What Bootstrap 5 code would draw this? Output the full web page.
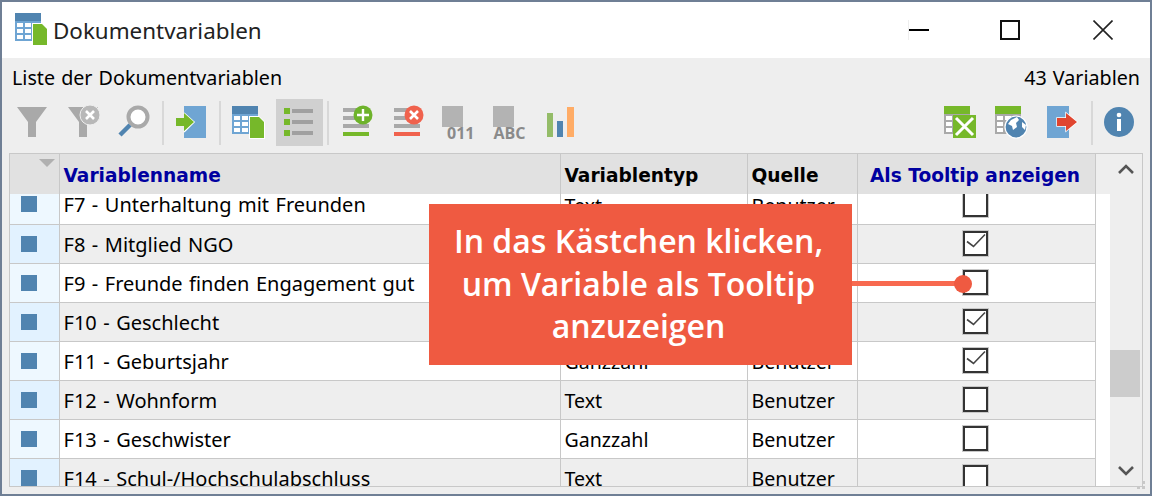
<!DOCTYPE html>
<html lang="de">
<head>
<meta charset="UTF-8">
<title>Dokumentvariablen</title>
<link rel="stylesheet" href="https://cdn.jsdelivr.net/npm/bootstrap@5.3.0/dist/css/bootstrap.min.css">
<style>
    html, body { margin: 0; height: 496px; overflow: hidden; }
    body { font-family: "Noto Sans", sans-serif; color: #000; }

    .app-window { position: relative; width: 1152px; height: 496px; background: #eee; border: 2px solid #6f7f95; overflow: hidden; }

    .title-bar { height: 56px; background: #fff; }
    .title-icon { margin-left: 11px; }
    .title-text { font-size: 22.4px; color: #222; margin-left: 6px; padding-top: 2px; }
    .win-btns { padding-right: 37px; }
    .win-min { width: 21px; height: 20px; margin-right: 71px; border-left: 1px solid #eee; position: relative; }
    .win-min::after { content: ""; position: absolute; left: 0; top: 9px; width: 20px; height: 2px; background: #000; }
    .win-max { margin-right: 73px; }

    .info-line { height: 39px; padding: 0 10px; font-size: 19.7px; word-spacing: 1px; }

    .tool-strip { height: 50px; padding: 2px 7px 0 6px; gap: 4px; align-items: flex-start; }
    .tool-btn { width: 47px; height: 47px; display: block; flex: none; }
    .tool-btn.is-on { background: #d0d0d0; margin-left: 1px; }
    .tool-sep { width: 2px; height: 44px; margin-top: 2px; background: #d8d8d8; flex: none; }
    .sep-l { margin-left: 1px; }
    .sep-n { margin-right: -1px; }
    .sep-r { margin-right: 1px; }

    .grid-box { margin: 6px 7px 0 7px; height: 334px; border: 1px solid #c8c8c8; }
    .grid-main { width: 1100px; flex: none; }
    .var-head { height: 40px; width: 1085px; background: #e1e1e1; }
    .var-table { table-layout: fixed; width: 1085px; border-collapse: collapse; margin: 0; }
    .var-table col:nth-child(1) { width: 49px; }
    .var-table col:nth-child(2) { width: 501px; }
    .var-table col:nth-child(3) { width: 187px; }
    .var-table col:nth-child(4) { width: 110px; }
    .var-table col:nth-child(5) { width: 238px; }
    .var-table td, .var-table th { border-right: 1px solid #c8c8c8; padding: 0 0 0 4px; font-size: 19.6px; vertical-align: middle; white-space: nowrap; overflow: hidden; }
    .var-table th { height: 40px; font-family: "DejaVu Sans", sans-serif; font-size: 18.6px; font-weight: 700; background: #e1e1e1; padding-top: 4px; }
    .var-table th.blue-head { color: #0000a0; }
    .var-table th.tip-head { padding: 4px 2px 0 0; }
    .var-table td { height: 39px; border-bottom: 1px solid #c8c8c8; padding-top: 2px; background: #fff; }
    .var-table td.name-cell { font-size: 20px; word-spacing: 1.3px; }
    .var-table tr:nth-child(even) td { background: #eee; }
    .var-table td.mark-cell { background: #eef8ff; padding: 0; }
    .var-table tr:nth-child(even) td.mark-cell { background: #e2f2ff; }
    .var-table .check-cell { padding: 0 2px 0 0; }
    .corner-cell { position: relative; }
    .sort-tri { position: absolute; left: 29px; top: 5px; width: 0; height: 0; border-left: 8px solid transparent; border-right: 8px solid transparent; border-top: 8px solid #b0b0b0; }
    .row-mark { display: block; width: 16px; height: 16px; background: #5084b0; margin: 0 0 0 11px; }

    .body-clip { height: 292px; overflow: hidden; background: #fff; }
    .body-clip .var-table { margin-top: -9px; }

    .tick-box { display: block; width: 25px; height: 25px; margin: 0 auto; background: #fff; border: 2px solid #333; box-shadow: 0 0 0 1px #c8c8c8; }
    .tick-box svg { display: block; }

    .scroll-col { width: 33px; flex: none; position: relative; }
    .scroll-thumb { position: absolute; left: 0; top: 196px; width: 30px; height: 47px; background: #ccc; }
    .scroll-up, .scroll-down { position: absolute; left: 7px; }
    .scroll-up { top: 9px; }
    .scroll-down { bottom: 9px; }

    .call-box { position: absolute; left: 427px; top: 202px; width: 423px; height: 161px; padding: 0 4px 1px 0; background: #ef5a41; color: #fff; font-family: "Open Sans", sans-serif; font-weight: 600; font-size: 32px; line-height: 42.5px; }
    .call-line { position: absolute; left: 850px; top: 279px; width: 106px; height: 5px; background: #f8694f; }
    .call-dot { position: absolute; left: 952px; top: 273px; width: 18px; height: 18px; border-radius: 50%; background: #ef5a41; }
    .grip-dots { position: absolute; right: 4px; bottom: 4px; }
</style>
</head>
<body>

<div class="app-window d-flex flex-column">

    <!-- Title bar -->
    <div class="title-bar d-flex align-items-center">
        <svg width="34" height="34" viewBox="13 13 34 34" class="flex-shrink-0 title-icon">
            <use href="#ico-table-doc" transform="translate(-217 -93)"/>
        </svg>
        <span class="title-text">Dokumentvariablen</span>
        <div class="win-btns ms-auto d-flex align-items-center">
            <div class="win-min"></div>
            <svg class="win-max" width="20" height="20" viewBox="0 0 20 20"><rect x="1" y="1" width="18" height="18" fill="none" stroke="#111" stroke-width="2"/></svg>
            <svg width="20" height="20" viewBox="0 0 20 20"><path d="M.5.5l19 19M19.5.5l-19 19" fill="none" stroke="#222" stroke-width="1.6"/></svg>
        </div>
    </div>

    <!-- Caption line -->
    <div class="info-line d-flex align-items-center justify-content-between">
        <span>Liste der Dokumentvariablen</span>
        <span>43 Variablen</span>
    </div>

    <!-- Toolbar -->
    <div class="tool-strip d-flex">
        <svg class="tool-btn" viewBox="8 99 47 47"><path d="M17 107h30l-11 15v15h-8v-15z" fill="#a9a9a9"/></svg>
        <svg class="tool-btn" viewBox="59 99 47 47"><path d="M68 107h30l-11 15v15h-8v-15z" fill="#a9a9a9"/><circle cx="90" cy="115" r="10" fill="#b8b8b8" stroke="#eee" stroke-width="1"/><path d="M86 111l8 8M94 111l-8 8" stroke="#fff" stroke-width="2.6"/></svg>
        <svg class="tool-btn" viewBox="110 99 47 47"><circle cx="138" cy="117" r="9.500" fill="#fff" stroke="#a9a9a9" stroke-width="4"/><path d="M120 135l10-10" stroke="#5084b0" stroke-width="4.500"/></svg>
        <div class="tool-sep sep-l"></div>
        <svg class="tool-btn" viewBox="168 99 47 47"><rect x="184" y="106" width="22" height="32" fill="#6fa5d3"/><path d="M184 113l10 9-10 10" fill="none" stroke="#fff" stroke-width="1.500"/><path d="M176 118h8v-5l10 9-10 9v-5h-8z" fill="#76b82a"/></svg>
        <div class="tool-sep sep-n"></div>
        <svg class="tool-btn" viewBox="224 99 47 47">
            <g id="ico-table-doc">
                <rect x="232" y="106" width="26" height="8" fill="#5084b0"/>
                <rect x="232" y="114" width="26" height="20" fill="#6fa5d3"/>
                <path d="M234 116h6v4h-6zM242 116h6v4h-6zM250 116h6v4h-6zM234 122h6v4h-6zM242 122h6v4h-6zM250 122h6v4h-6zM234 128h6v4h-6zM242 128h6v4h-6z" fill="#fff"/>
                <path d="M249 116h10l6 6v17h-16z" fill="#fff"/>
                <path d="M250 117h9l5 5v16h-14z" fill="#76b82a"/>
            </g>
        </svg>
        <svg class="tool-btn is-on" viewBox="276 99 47 47">
            <path d="M284 108h6v6h-6zM284 119h6v6h-6zM284 130h6v6h-6z" fill="#76b82a"/>
            <path d="M292 109h21v4h-21zM292 120h21v4h-21zM292 131h21v4h-21z" fill="#a0a0a0"/>
        </svg>
        <div class="tool-sep sep-r"></div>
        <svg class="tool-btn" viewBox="334 99 47 47">
            <path d="M343 108h26v4h-26zM343 116h26v4h-26zM343 124h26v4h-26z" fill="#a9a9a9"/><rect x="343" y="132" width="26" height="4" fill="#76b82a"/>
            <circle cx="363" cy="115" r="9.500" fill="#6eb32b"/><path d="M363 109v12M357 115h12" stroke="#fff" stroke-width="2.400"/>
        </svg>
        <svg class="tool-btn" viewBox="385 99 47 47">
            <path d="M394 108h26v4h-26zM394 116h26v4h-26zM394 124h26v4h-26z" fill="#a9a9a9"/><rect x="394" y="132" width="26" height="4" fill="#f0624d"/>
            <circle cx="414" cy="115" r="9.500" fill="#f0624d"/><path d="M410 111l8 8M418 111l-8 8" stroke="#fff" stroke-width="2.600"/>
        </svg>
        <svg class="tool-btn" viewBox="436 99 47 47">
            <rect x="442" y="106" width="21" height="21" fill="#b3b3b3"/>
            <text x="447" y="139" font-family="Open Sans, sans-serif" font-weight="700" font-size="16" fill="#8a8a8a">011</text>
        </svg>
        <svg class="tool-btn" viewBox="487 99 47 47">
            <rect x="493" y="106" width="21" height="21" fill="#b3b3b3"/>
            <text x="493.500" y="139" font-family="Open Sans, sans-serif" font-weight="700" font-size="16" fill="#8a8a8a">ABC</text>
        </svg>
        <svg class="tool-btn" viewBox="538 99 47 47">
            <rect x="547" y="113" width="6" height="24" fill="#94bc68"/><rect x="557" y="121" width="6" height="16" fill="#5084b0"/><rect x="567" y="107" width="7" height="30" fill="#ffac66"/>
        </svg>
        <div class="ms-auto"></div>
        <svg class="tool-btn" viewBox="937 99 47 47">
            <rect x="944" y="106" width="26" height="8" fill="#76b82a"/><rect x="944" y="114" width="26" height="20" fill="#a9a9a9"/>
            <path d="M946 116h6v4h-6zM954 116h6v4h-6zM962 116h6v4h-6zM946 122h6v4h-6zM946 128h6v4h-6z" fill="#fff"/>
            <rect x="953" y="115" width="23" height="23" fill="#76b82a"/><path d="M956 118l17 17M973 118l-17 17" stroke="#fff" stroke-width="3"/>
        </svg>
        <svg class="tool-btn" viewBox="988 99 47 47">
            <rect x="995" y="106" width="26" height="8" fill="#76b82a"/><rect x="995" y="114" width="26" height="20" fill="#a9a9a9"/>
            <path d="M997 116h6v4h-6zM1005 116h6v4h-6zM1013 116h6v4h-6zM997 122h6v4h-6zM997 128h6v4h-6z" fill="#fff"/>
            <circle cx="1016" cy="127" r="11" fill="#5084b0" stroke="#fff" stroke-width="1.200"/>
            <path d="M1011 120l6-3 2 3-3 3 1 4-4 3-1-4-4-2zM1022 122l4 3-1 5-3-3z" fill="#fff"/>
        </svg>
        <svg class="tool-btn" viewBox="1039 99 47 47">
            <rect x="1047" y="106" width="22" height="32" fill="#6fa5d3"/>
            <path d="M1057 118h9v-5l11 9-11 9v-5h-9z" fill="#e0452f" stroke="#fff" stroke-width="1.400" paint-order="stroke"/>
        </svg>
        <div class="tool-sep sep-l sep-n"></div>
        <svg class="tool-btn" viewBox="1096 99 47 47">
            <circle cx="1119" cy="122" r="15" fill="#5084b0"/><circle cx="1119" cy="115" r="2.300" fill="#fff"/><rect x="1117" y="119" width="4" height="12" fill="#fff"/>
        </svg>
    </div>

    <!-- Variable grid -->
    <div class="grid-box d-flex">
        <div class="grid-main">
            <div class="var-head">
                <table class="var-table">
                    <colgroup><col><col><col><col><col></colgroup>
                    <tr>
                        <th class="corner-cell"><span class="sort-tri"></span></th>
                        <th class="blue-head">Variablenname</th>
                        <th>Variablentyp</th>
                        <th>Quelle</th>
                        <th class="blue-head tip-head text-center">Als Tooltip anzeigen</th>
                    </tr>
                </table>
            </div>
            <div class="body-clip">
                <table class="var-table">
                    <colgroup><col><col><col><col><col></colgroup>
                    <tbody id="var-rows"></tbody>
                </table>
            </div>
        </div>
        <div class="scroll-col">
            <svg class="scroll-up" width="18" height="12" viewBox="0 0 18 12"><path d="M2 10l7-7 7 7" fill="none" stroke="#555" stroke-width="2.600"/></svg>
            <div class="scroll-thumb"></div>
            <svg class="scroll-down" width="18" height="12" viewBox="0 0 18 12"><path d="M2 2l7 7 7-7" fill="none" stroke="#555" stroke-width="2.600"/></svg>
        </div>
    </div>

    <svg class="grip-dots" width="9" height="9" viewBox="0 0 9 9"><path d="M5 0h3v3H5zM0 5h3v3H0zM5 5h3v3H5z" fill="#c8c8c8"/></svg>

    <!-- Callout -->
    <div class="call-box d-flex align-items-center justify-content-center text-center">
        <div>In das Kästchen klicken,<br>um Variable als Tooltip<br>anzuzeigen</div>
    </div>
    <div class="call-line"></div>
    <div class="call-dot"></div>
</div>

<script src="https://cdn.jsdelivr.net/npm/bootstrap@5.3.0/dist/js/bootstrap.bundle.min.js"></script>
<script>
    const vars = [
        ["F7 - Unterhaltung mit Freunden", "Text", "Benutzer", false],
        ["F8 - Mitglied NGO", "Text", "Benutzer", true],
        ["F9 - Freunde finden Engagement gut", "Text", "Benutzer", false],
        ["F10 - Geschlecht", "Text", "Benutzer", true],
        ["F11 - Geburtsjahr", "Ganzzahl", "Benutzer", true],
        ["F12 - Wohnform", "Text", "Benutzer", false],
        ["F13 - Geschwister", "Ganzzahl", "Benutzer", false],
        ["F14 - Schul-/Hochschulabschluss", "Text", "Benutzer", false]
    ];
    const tick = '<svg width="21" height="21" viewBox="0 0 21 21"><path d="M2 8.500l6.500 5L20 1.500" fill="none" stroke="#444" stroke-width="1.600"/></svg>';

    document.getElementById("var-rows").innerHTML = vars.map(([name, type, source, on]) => `
        <tr>
            <td class="mark-cell"><span class="row-mark"></span></td>
            <td class="name-cell">${name}</td>
            <td>${type}</td>
            <td>${source}</td>
            <td class="check-cell"><span class="tick-box">${on ? tick : ""}</span></td>
        </tr>`).join("");
</script>
</body>
</html>
